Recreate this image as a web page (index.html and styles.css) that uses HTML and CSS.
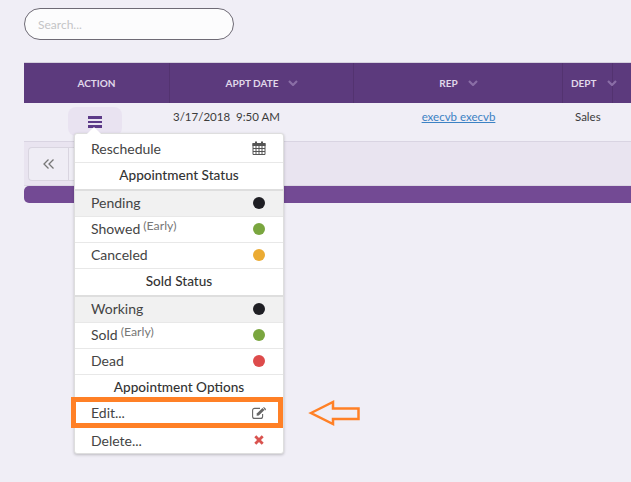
FILE: index.html
```html
<!DOCTYPE html>
<html lang="en">
<head>
<meta charset="utf-8">
<title>Appointments</title>
<link rel="stylesheet" href="styles.css">
</head>
<body>
<div class="page">
  <div class="search-wrap"><input class="search" type="text" placeholder="Search..."></div>
  <div class="grid">
    <div class="thead">
      <div class="th c-action">ACTION</div>
      <div class="th c-date">APPT DATE<svg class="chev" viewBox="0 0 10 6"><path d="M1 1l4 4 4-4" /></svg></div>
      <div class="th c-rep">REP<svg class="chev" viewBox="0 0 10 6"><path d="M1 1l4 4 4-4" /></svg></div>
      <div class="th c-dept">DEPT<svg class="chev" viewBox="0 0 10 6"><path d="M1 1l4 4 4-4" /></svg></div>
      <div class="th c-rest"></div>
    </div>
    <div class="row">
      <div class="td c-action">
        <button class="menu-btn" aria-label="Menu"><span></span><span></span><span></span></button>
      </div>
      <div class="td c-date date-cell">3/17/2018&nbsp; 9:50 AM</div>
      <div class="td c-rep rep-cell"><a href="#">execvb execvb</a></div>
      <div class="td c-dept dept-cell">Sales</div>
    </div>
    <div class="pager">
      <div class="pager-btns">
        <button class="pg" aria-label="First"><svg class="dbl" viewBox="0 0 11 10"><path d="M5.500 .5L1 5l4.500 4.500M10.500 .5L6 5l4.500 4.500"/></svg></button>
        <button class="pg" aria-label="Previous"></button>
      </div>
    </div>
    <div class="footer-bar"></div>
  </div>

  <div class="menu">
    <div class="arrow"></div>
    <div class="item first">Reschedule
      <svg class="ic cal" viewBox="0 0 14 14"><path fill="#555" d="M3 .5h2v2.500H3zM9 .5h2v2.500H9z"/><path fill="#555" d="M.5 2h13v3H.5z"/><path fill="none" stroke="#555" d="M1 2.500h12v11H1zM1 7.500h12M1 10.500h12M4 5v8.500M7 5v8.500M10 5v8.500"/></svg>
    </div>
    <div class="head">Appointment Status</div>
    <div class="item sel">Pending<i class="dot black"></i></div>
    <div class="item">Showed<sup>(Early)</sup><i class="dot green"></i></div>
    <div class="item">Canceled<i class="dot amber"></i></div>
    <div class="head">Sold Status</div>
    <div class="item sel">Working<i class="dot black"></i></div>
    <div class="item">Sold<sup>(Early)</sup><i class="dot green"></i></div>
    <div class="item">Dead<i class="dot red"></i></div>
    <div class="head">Appointment Options</div>
    <div class="item">Edit...
      <svg class="ic edit" viewBox="0 0 14 12"><path fill="none" stroke="#666" stroke-width="1.100" d="M10.600 7v2.400a2 2 0 0 1-2 2H2.600a2 2 0 0 1-2-2V3.400a2 2 0 0 1 2-2H8"/><path fill="#666" d="M4.800 6.500L10.500.9l2 2-5.700 5.600-2.200.3z"/><path fill="#666" d="M11.200.3l.7-.3L14 2l-.2.7-.7.700z"/></svg>
    </div>
    <div class="item last">Delete...
      <svg class="ic del" viewBox="0 0 10 10"><path stroke="#d9534f" stroke-width="2.800" d="M1.300 1.300l7.400 7.400M8.700 1.300L1.300 8.700"/></svg>
    </div>
  </div>

  <div class="highlight"></div>
  <svg class="callout" viewBox="0 0 54 28"><path fill="none" stroke="#ff8026" stroke-width="2.500" d="M3 14L25 3v6.500h25.500v10.500H25V25z"/></svg>
</div>
</body>
</html>
```
FILE: styles.css
```css
* { box-sizing: border-box; }
html, body { margin: 0; padding: 0; }
body {
  width: 631px;
  height: 482px;
  overflow: hidden;
  background: #f0eef6;
  font-family: Lato, "Open Sans", sans-serif;
  color: #333;
}
.page { position: relative; width: 631px; height: 482px; padding: 8px 0 0 24px; overflow: hidden; }
.search-wrap { height: 32px; }
.search {
  display: block;
  width: 210px;
  height: 32px;
  border: 1px solid #6e6a75;
  border-radius: 16px;
  background: #fcfcfd;
  padding: 0 13px;
  font: 12px Lato, sans-serif;
  outline: none;
}
.search::placeholder { color: #c4c4c6; opacity: 1; }
.grid { margin-top: 22px; width: 607px; }
.thead {
  display: flex;
  height: 41px;
  background: #5c3a7d;
  border-top: 1px solid #d5d0de;
}
.th {
  display: flex;
  align-items: center;
  justify-content: center;
  height: 40px;
  font-size: 10px;
  font-weight: 700;
  color: #e0d8ea;
  border-right: 1px solid #533370;
}
.chev { flex: none; width: 10px; height: 6px; margin-left: 10px; fill: none; stroke: #8a6ea6; stroke-width: 2.200; }
.c-action { width: 146px; flex: none; }
.c-date { width: 184px; flex: none; }
.c-rep { width: 209px; flex: none; }
.th.c-date { padding-left: 1px; }
.th.c-rep { padding-left: 1px; }
.c-dept { width: 50px; flex: none; }
.c-rest { flex: 1; border-right: 0; }
.th.c-dept { justify-content: flex-start; padding-left: 8px; overflow: visible; }
.row {
  display: flex;
  height: 39px;
  background: #f0eef6;
  border-bottom: 1px solid #d9d4e2;
}
.td { font-size: 11.500px; color: #3c3c3c; }
.td.c-action { display: flex; justify-content: center; padding: 4px 4px 0 0; }
.date-cell { padding: 7px 0 0 3px; }
.rep-cell { text-align: center; padding-top: 7px; }
.rep-cell a { color: #3c82c4; }
.dept-cell { padding: 7px 0 0 12px; }
.menu-btn {
  width: 54px;
  height: 29px;
  border: 0;
  border-radius: 8px;
  background: #e9e3f1;
  display: flex;
  flex-direction: column;
  align-items: center;
  gap: 2px;
  padding: 9px 0 0;
}
.menu-btn span { flex: none; display: block; width: 14px; height: 2.500px; background: #5c3a88; }
.pager {
  height: 44px;
  background: #e9e4f0;
  border-bottom: 1px solid #dcd7e4;
  padding: 5px 0 0 4px;
}
.pager-btns { display: flex; }
.pg {
  display: flex;
  align-items: center;
  justify-content: center;
  width: 40px;
  height: 34px;
  border: 1px solid #d9d5e0;
  background: #efedf5;
  padding: 0;
}
.pg:first-child { border-radius: 4px 0 0 4px; border-right: 0; }
.dbl { width: 11px; height: 10px; fill: none; stroke: #777; stroke-width: 1.300; }
.footer-bar { height: 17px; background: #734a94; border-radius: 5px 0 0 5px; }
.menu {
  position: absolute;
  left: 74px;
  top: 133px;
  width: 210px;
  background: #fff;
  border: 1px solid #dedede;
  border-radius: 3px;
  box-shadow: 0 1px 3px rgba(0,0,0,.22);
  font-size: 14px;
  color: #444;
}
.arrow {
  position: absolute;
  left: 14px;
  top: -5px;
  width: 10px;
  height: 10px;
  background: #fff;
  transform: rotate(45deg);
}
.item {
  position: relative;
  display: flex;
  align-items: center;
  justify-content: space-between;
  height: 26px;
  padding: 0 18px 2px 16px;
  border-bottom: 1px solid #e8e8e8;
}
.item.first { height: 29px; padding-bottom: 0; }
.item.last { border-bottom: 0; height: 26px; padding-bottom: 0; }
.item.sel { background: #f1f1f1; border-top: 2px solid #dedede; height: 28px; }
.item sup { font-size: 12.300px; color: #777; line-height: 0; margin-left: 3px; margin-right: auto; position: relative; top: -3px; }
.head {
  height: 26px;
  display: flex;
  align-items: center;
  justify-content: center;
  padding-bottom: 2px;
  font-size: 13.600px;
  font-weight: 500;
  color: #333;
}
.dot { display: block; width: 12px; height: 12px; border-radius: 50%; }
.black { background: #1f1f24; }
.green { background: #7aa63f; }
.amber { background: #ebab33; }
.red { background: #dd4b4b; }
.ic { width: 14px; height: 14px; display: block; overflow: visible; }
.ic.cal { margin-right: -1px; }
.ic.edit { width: 14px; height: 12px; margin-right: -1px; }
.ic.del { width: 10px; height: 10px; margin-right: 1px; }
.highlight {
  position: absolute;
  left: 71px;
  top: 397px;
  width: 212px;
  height: 31px;
  border: 5px solid #ff8026;
}
.callout { position: absolute; left: 308px; top: 399px; width: 54px; height: 28px; }
```
